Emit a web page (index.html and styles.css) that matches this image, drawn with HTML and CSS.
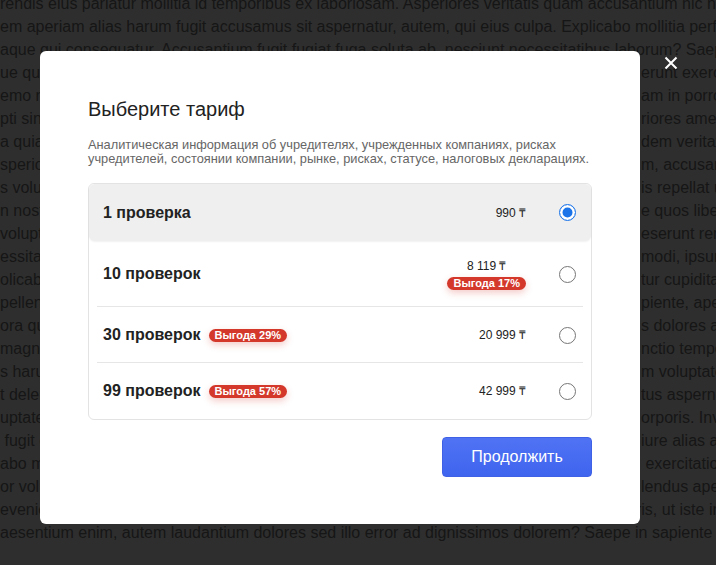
FILE: index.html
```html
<!DOCTYPE html>
<html lang="ru">

<head>
    <meta charset="UTF-8">
    <meta name="viewport" content="width=device-width, initial-scale=1.0">
    <title>Выберите тариф</title>
    <link rel="stylesheet" href="styles.css">
</head>

<body>
    <div class="page">
        <div class="line"><span class="full">rendis eius pariatur mollitia id temporibus ex laboriosam. Asperiores veritatis quam accusantium hic nihil</span></div>
        <div class="line"><span class="full">em aperiam alias harum fugit accusamus sit aspernatur, autem, qui eius culpa. Explicabo mollitia perferendis</span></div>
        <div class="line"><span class="full">aque qui consequatur. Accusantium fugit fugiat fuga soluta ab, nesciunt necessitatibus laborum? Saepe</span></div>
        <div class="line"><span>ue quod dolorem sunt aliquid natus odit</span><span>erunt exercitationem</span></div>
        <div class="line"><span>emo ratione porro quas fugit</span><span>am in porro</span></div>
        <div class="line"><span>pti sint quaerat iste odio</span><span>riores amet</span></div>
        <div class="line"><span>a quia magni nulla dolore</span><span>dem veritatis</span></div>
        <div class="line"><span>speriores facere nobis</span><span>m, accusantium</span></div>
        <div class="line"><span>s voluptas minus eaque</span><span>is repellat ut</span></div>
        <div class="line"><span>n nostrum iusto dolor</span><span>e quos libero</span></div>
        <div class="line"><span>voluptates ipsa cumque</span><span>eserunt rem</span></div>
        <div class="line"><span>essitatibus dicta fuga</span><span>modi, ipsum</span></div>
        <div class="line"><span>olicabo nemo tempora</span><span>tur cupiditate</span></div>
        <div class="line"><span>pellendus totam quae</span><span>piente, aperiam</span></div>
        <div class="line"><span>ora quis ipsa autem</span><span>s dolores at</span></div>
        <div class="line"><span>magni. Officia eum</span><span>nctio tempore</span></div>
        <div class="line"><span>s harum quidem</span><span>m voluptatem</span></div>
        <div class="line"><span>t deleniti sequi</span><span>tus aspernatur</span></div>
        <div class="line"><span>uptatem odit</span><span>orporis. Inventore</span></div>
        <div class="line"><span> fugit omnis</span><span>iure alias at</span></div>
        <div class="line"><span>abo mollitia</span><span> exercitationem</span></div>
        <div class="line"><span>or voluptas</span><span>lendus aperiam</span></div>
        <div class="line"><span class="full">eveniet, iste a assumenda, deserunt ratione deleniti ab. Repellat quasi repudiandae corporis, ut iste in</span></div>
        <div class="line"><span class="full">aesentium enim, autem laudantium dolores sed illo error ad dignissimos dolorem? Saepe in sapiente</span></div>
    </div>

    <div class="overlay">
        <div class="modal-wrap">
            <button class="close" type="button" aria-label="Закрыть">
                <svg width="14" height="14" viewBox="0 0 14 14">
                    <path d="M1.5 1.5 L12.5 12.5 M12.5 1.5 L1.5 12.5" stroke="#fff" stroke-width="2" fill="none" />
                </svg>
            </button>

            <div class="modal">
                <h2 class="modal-title">Выберите тариф</h2>
                <p class="modal-desc">Аналитическая информация об учредителях, учрежденных компаниях, рисках учредителей, состоянии компании, рынке, рисках, статусе, налоговых декларациях.</p>

                <div class="plans">
                    <label class="plan plan-selected">
                        <span class="plan-name">1 проверка</span>
                        <span class="plan-price">990 ₸</span>
                        <span class="radio radio-on"></span>
                    </label>
                    <label class="plan plan-tall">
                        <span class="plan-name">10 проверок</span>
                        <span class="plan-price">
                            <span>8 119 ₸</span>
                            <span class="badge">Выгода 17%</span>
                        </span>
                        <span class="radio"></span>
                    </label>
                    <label class="plan">
                        <span class="plan-name">30 проверок</span>
                        <span class="badge">Выгода 29%</span>
                        <span class="plan-price">20 999 ₸</span>
                        <span class="radio"></span>
                    </label>
                    <label class="plan">
                        <span class="plan-name">99 проверок</span>
                        <span class="badge">Выгода 57%</span>
                        <span class="plan-price">42 999 ₸</span>
                        <span class="radio"></span>
                    </label>
                </div>

                <div class="actions">
                    <button class="btn" type="button">Продолжить</button>
                </div>
            </div>
        </div>
    </div>
</body>

</html>
```

FILE: styles.css
```css
body {
    margin: 0;
    background: #fff;
    font-family: "Liberation Sans", Arial, sans-serif;
    overflow: hidden;
}

.page {
    margin-top: -8px;
    font-size: 16px;
    line-height: 23px;
    color: #7a7a7a;
}

.line {
    display: grid;
    grid-template-columns: 641px 1fr;
    white-space: pre;
    overflow: hidden;
    height: 23px;
}

.line span {
    overflow: hidden;
}

.line .full {
    grid-column: 1 / 3;
}

.overlay {
    position: fixed;
    inset: 0;
    background: rgba(0, 0, 0, 0.82);
    padding: 51px 0 0 40px;
}

.modal-wrap {
    position: relative;
    width: 600px;
}

.close {
    position: absolute;
    top: 5px;
    right: -38px;
    width: 14px;
    height: 14px;
    padding: 0;
    border: 0;
    background: none;
    cursor: pointer;
}

.close svg {
    display: block;
}

.modal {
    background: #fff;
    border-radius: 6px;
    padding: 46px 48px 47px;
}

.modal-title {
    margin: 0;
    font-size: 20px;
    line-height: 24px;
    font-weight: 400;
    color: #222;
}

.modal-desc {
    margin: 17px 0 0;
    font-size: 12.8px;
    line-height: 14px;
    color: #666;
}

.plans {
    margin-top: 17px;
    border: 1px solid #e3e3e3;
    border-radius: 6px;
}

.plan {
    display: flex;
    align-items: center;
    height: 56px;
    padding: 0 15px 0 14px;
    cursor: pointer;
}

.plan:not(:last-child):not(.plan-selected) {
    background-image: linear-gradient(#e6e6e6, #e6e6e6);
    background-size: calc(100% - 16px) 1px;
    background-position: center bottom;
    background-repeat: no-repeat;
}

.plan-selected {
    height: 57px;
    background: #efefef;
    border-radius: 6px;
    box-shadow: 0 1px 2px rgba(0, 0, 0, 0.06);
}

.plan-tall {
    height: 66px;
}

.plan-name {
    font-size: 16px;
    font-weight: 700;
    color: #222;
}

.plan-price {
    margin-left: auto;
    display: flex;
    flex-direction: column;
    align-items: center;
    gap: 4px;
    font-size: 12px;
    line-height: 14px;
    color: #222;
}

.badge {
    display: inline-block;
    height: 13px;
    padding: 0 6px;
    border-radius: 7px;
    background: #d3382b;
    box-shadow: 0 3px 7px rgba(211, 56, 43, 0.25);
    color: #fff;
    font-size: 11px;
    line-height: 13px;
    font-weight: 700;
}

.plan-name + .badge {
    margin-left: 8px;
}

.radio {
    width: 17px;
    height: 17px;
    box-sizing: border-box;
    margin-left: 33px;
    border: 1px solid #767676;
    border-radius: 50%;
    background: #fff;
}

.radio-on {
    border: 1.5px solid #1a73e8;
    box-shadow: inset 0 0 0 2.5px #fff, inset 0 0 0 10px #1a73e8;
}

.actions {
    display: flex;
    justify-content: flex-end;
    margin-top: 17px;
}

.btn {
    width: 150px;
    height: 40px;
    border: 1px solid #3f61e6;
    border-radius: 4px;
    background: linear-gradient(#5073f4, #3f64ee);
    color: #fff;
    font-family: "Liberation Sans", Arial, sans-serif;
    font-size: 16px;
    cursor: pointer;
}
```
